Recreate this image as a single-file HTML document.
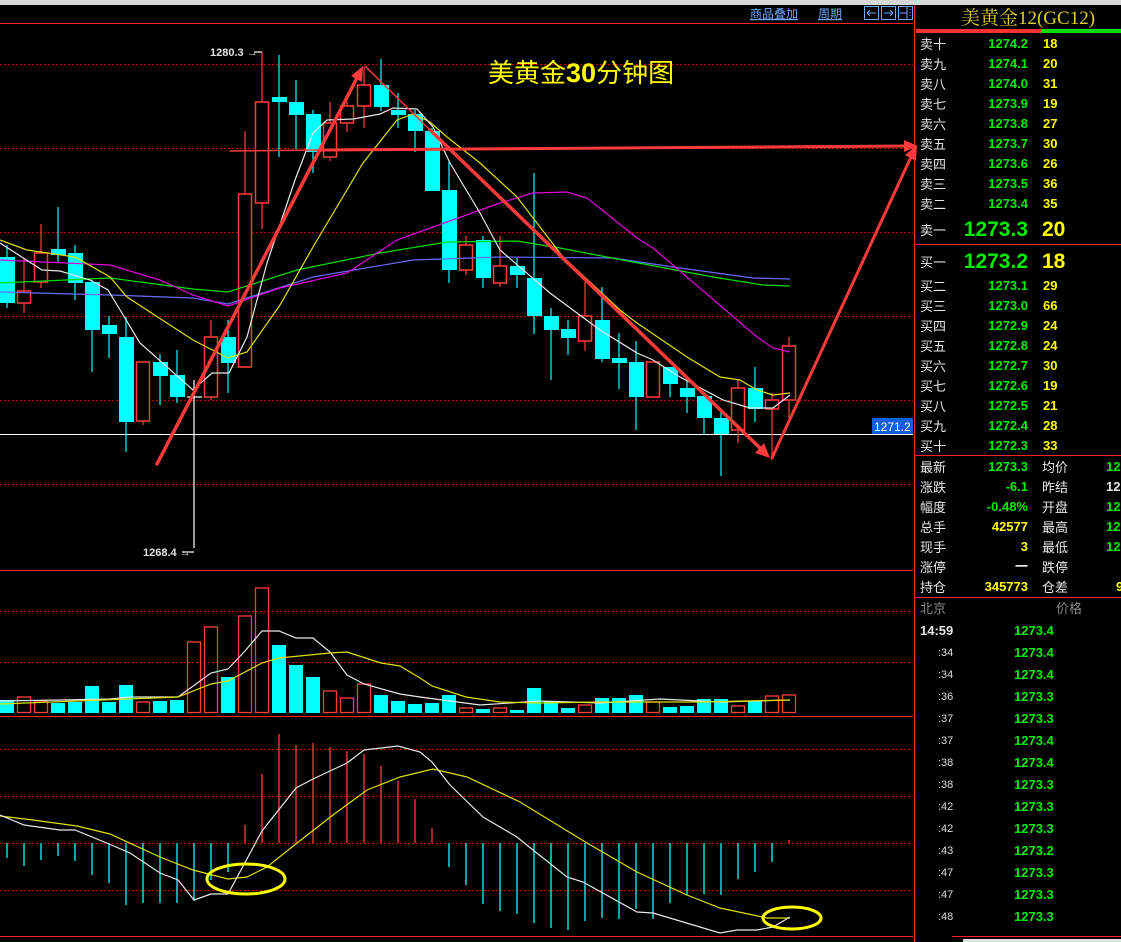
<!DOCTYPE html>
<html><head><meta charset="utf-8"><style>
body{margin:0;background:#000;width:1121px;height:942px;overflow:hidden;position:relative;font-family:"Liberation Sans","Noto Sans CJK SC",sans-serif}
.t{position:absolute;white-space:nowrap;font-size:13px;line-height:16px}
.l{color:#e8e8e8;font-family:"Noto Sans CJK SC",sans-serif;font-size:13px}
.g{color:#00ee00;font-weight:bold}
.y{color:#ffff00;font-weight:bold}
.w{color:#e8e8e8;font-weight:bold}
.r{text-align:right;width:70px}
</style></head><body>
<div style="position:absolute;left:0;top:0;width:1121px;height:5px;background:#d8d8d8"></div>
<svg width="1121" height="942" style="position:absolute;left:0;top:0" xmlns="http://www.w3.org/2000/svg">
<g stroke="#ff2020" stroke-width="1">
<line x1="0" y1="23.5" x2="913" y2="23.5"/>
<line x1="0" y1="570.5" x2="913" y2="570.5"/>
<line x1="0" y1="716.5" x2="913" y2="716.5"/>
<line x1="0" y1="936.5" x2="913" y2="936.5"/>
<line x1="914.5" y1="5" x2="914.5" y2="942"/>
</g>
<g stroke="#c00000" stroke-width="1" stroke-dasharray="2,2">
<line x1="0" y1="64.5" x2="913" y2="64.5"/><line x1="0" y1="148.5" x2="913" y2="148.5"/>
<line x1="0" y1="232.5" x2="913" y2="232.5"/><line x1="0" y1="316.5" x2="913" y2="316.5"/>
<line x1="0" y1="400.5" x2="913" y2="400.5"/><line x1="0" y1="484.5" x2="913" y2="484.5"/>
<line x1="0" y1="611.5" x2="913" y2="611.5"/><line x1="0" y1="662.5" x2="913" y2="662.5"/>
<line x1="0" y1="749.5" x2="913" y2="749.5"/><line x1="0" y1="796.5" x2="913" y2="796.5"/>
<line x1="0" y1="843.5" x2="913" y2="843.5"/><line x1="0" y1="890.5" x2="913" y2="890.5"/>
</g>
<line x1="0" y1="434.5" x2="913" y2="434.5" stroke="#fff" stroke-width="1"/>
<rect x="872" y="418" width="41" height="16" fill="#1060e0"/>
<text x="874" y="431" fill="#fff" font-size="12" font-family="Liberation Sans">1271.2</text>
<!-- wicks -->
<g stroke="#00ffff" stroke-width="1.2">
<line x1="7" y1="245" x2="7" y2="308"/><line x1="58" y1="207" x2="58" y2="262"/><line x1="75" y1="245" x2="75" y2="300"/><line x1="92" y1="280" x2="92" y2="372"/><line x1="109" y1="316" x2="109" y2="358"/><line x1="126" y1="317" x2="126" y2="452"/><line x1="160" y1="354" x2="160" y2="405"/><line x1="177" y1="350" x2="177" y2="403"/><line x1="228" y1="320" x2="228" y2="393"/><line x1="279" y1="55" x2="279" y2="157"/><line x1="296" y1="80" x2="296" y2="149"/><line x1="313" y1="110" x2="313" y2="173"/><line x1="381" y1="59" x2="381" y2="111"/><line x1="398" y1="93" x2="398" y2="128"/><line x1="415" y1="110" x2="415" y2="152"/><line x1="432" y1="128" x2="432" y2="191"/><line x1="449" y1="162" x2="449" y2="283"/><line x1="483" y1="236" x2="483" y2="288"/><line x1="517" y1="258" x2="517" y2="288"/><line x1="534" y1="173" x2="534" y2="334"/><line x1="551" y1="308" x2="551" y2="380"/><line x1="568" y1="320" x2="568" y2="355"/><line x1="602" y1="287" x2="602" y2="362"/><line x1="619" y1="333" x2="619" y2="389"/><line x1="636" y1="341" x2="636" y2="430"/><line x1="670" y1="367" x2="670" y2="397"/><line x1="687" y1="380" x2="687" y2="413"/><line x1="704" y1="397" x2="704" y2="434"/><line x1="721" y1="409" x2="721" y2="476"/><line x1="755" y1="367" x2="755" y2="422"/>
</g>
<g stroke="#ff3c3c" stroke-width="1.2">
<line x1="24" y1="258" x2="24" y2="313"/><line x1="41" y1="224" x2="41" y2="288"/><line x1="143" y1="362" x2="143" y2="425"/><line x1="211" y1="320" x2="211" y2="400"/><line x1="245" y1="131" x2="245" y2="368"/><line x1="262" y1="52" x2="262" y2="229"/><line x1="330" y1="102" x2="330" y2="161"/><line x1="347" y1="102" x2="347" y2="132"/><line x1="364" y1="67" x2="364" y2="128"/><line x1="466" y1="236" x2="466" y2="275"/><line x1="500" y1="236" x2="500" y2="287"/><line x1="585" y1="282" x2="585" y2="351"/><line x1="738" y1="379" x2="738" y2="443"/><line x1="772" y1="393" x2="772" y2="460"/><line x1="789" y1="337" x2="789" y2="422"/>
</g>
<g stroke="#fff" stroke-width="1.2"><line x1="194" y1="380" x2="194" y2="548"/><line x1="187" y1="397" x2="202" y2="397"/><line x1="254" y1="52" x2="262" y2="52"/><line x1="182" y1="552" x2="194" y2="552"/></g>
<g fill="#00ffff">
<rect x="0" y="257" width="15" height="46"/><rect x="51" y="249" width="15" height="6"/><rect x="68" y="253" width="15" height="30"/><rect x="85" y="282" width="15" height="48"/><rect x="102" y="325" width="15" height="9"/><rect x="119" y="337" width="15" height="85"/><rect x="153" y="362" width="15" height="14"/><rect x="170" y="375" width="15" height="22"/><rect x="221" y="337" width="15" height="26"/><rect x="272" y="97" width="15" height="5"/><rect x="289" y="102" width="15" height="13"/><rect x="306" y="114" width="15" height="38"/><rect x="374" y="85" width="15" height="22"/><rect x="391" y="110" width="15" height="5"/><rect x="408" y="114" width="15" height="17"/><rect x="425" y="131" width="15" height="60"/><rect x="442" y="190" width="15" height="80"/><rect x="476" y="240" width="15" height="38"/><rect x="510" y="266" width="15" height="9"/><rect x="527" y="278" width="15" height="38"/><rect x="544" y="316" width="15" height="14"/><rect x="561" y="329" width="15" height="9"/><rect x="595" y="320" width="15" height="39"/><rect x="612" y="358" width="15" height="5"/><rect x="629" y="362" width="15" height="35"/><rect x="663" y="367" width="15" height="17"/><rect x="680" y="388" width="15" height="9"/><rect x="697" y="396" width="15" height="22"/><rect x="714" y="418" width="15" height="16"/><rect x="748" y="388" width="15" height="21"/>
</g>
<g fill="#000" stroke="#ff3c3c" stroke-width="1.5">
<rect x="17.5" y="291" width="13" height="12"/><rect x="34.5" y="253" width="13" height="29"/><rect x="136.5" y="362" width="13" height="59"/><rect x="204.5" y="337" width="13" height="60"/><rect x="238.5" y="194" width="13" height="173"/><rect x="255.5" y="102" width="13" height="101"/><rect x="323.5" y="123" width="13" height="34"/><rect x="340.5" y="106" width="13" height="17"/><rect x="357.5" y="85" width="13" height="21"/><rect x="459.5" y="245" width="13" height="25"/><rect x="493.5" y="266" width="13" height="17"/><rect x="578.5" y="316" width="13" height="25"/><rect x="646.5" y="362" width="13" height="35"/><rect x="731.5" y="388" width="13" height="42"/><rect x="765.5" y="400" width="13" height="9"/><rect x="782.5" y="346" width="13" height="54"/>
</g>
<g fill="none" stroke-width="1.2">
<polyline stroke="#6a6aff" points="0,292 110,295 193,298 228,304 313,277 413,260 500,257 613,258 680,268 753,278 790,279"/>
<polyline stroke="#00dd00" points="0,283 110,278 193,289 228,292 297,270 380,253 447,242 517,241 560,248 633,262 713,277 763,285 790,286"/>
<polyline stroke="#e000e0" points="0,260 110,265 160,280 193,295 228,306 280,288 347,273 397,240 447,222 500,203 533,193 567,192 587,198 637,238 653,248 757,337 773,348 790,352"/>
<polyline stroke="#e0e000" points="0,240 27,250 75,257 110,277 127,297 193,340 228,358 247,352 280,305 313,247 363,163 397,120 413,114 430,122 447,137 480,163 517,197 563,257 620,310 637,323 687,357 720,377 740,380 757,390 773,395 790,393"/>
<polyline stroke="#e8e8e8" points="0,243 42,270 60,271 90,280 108,290 140,343 193,390 212,373 229,373 247,337 267,263 295,180 313,133 327,120 353,119 380,114 393,108 417,109 433,127 450,163 480,213 500,250 550,293 600,330 637,353 653,360 680,377 723,400 750,408 773,408 790,395"/>
</g>
<!-- volume -->
<g fill="#00ffff">
<rect x="0" y="700" width="14" height="13"/><rect x="51" y="703" width="14" height="10"/><rect x="68" y="702" width="14" height="11"/><rect x="85" y="686" width="14" height="27"/><rect x="102" y="702" width="14" height="11"/><rect x="119" y="685" width="14" height="28"/><rect x="153" y="701" width="14" height="12"/><rect x="170" y="700" width="14" height="13"/><rect x="221" y="677" width="14" height="36"/><rect x="272" y="645" width="14" height="68"/><rect x="289" y="665" width="14" height="48"/><rect x="306" y="677" width="14" height="36"/><rect x="374" y="695" width="14" height="18"/><rect x="391" y="701" width="14" height="12"/><rect x="408" y="704" width="14" height="9"/><rect x="425" y="703" width="14" height="10"/><rect x="442" y="695" width="14" height="18"/><rect x="476" y="709" width="14" height="4"/><rect x="510" y="710" width="14" height="3"/><rect x="527" y="688" width="14" height="25"/><rect x="544" y="701" width="14" height="12"/><rect x="561" y="708" width="14" height="5"/><rect x="595" y="698" width="14" height="15"/><rect x="612" y="698" width="14" height="15"/><rect x="629" y="695" width="14" height="18"/><rect x="663" y="707" width="14" height="6"/><rect x="680" y="706" width="14" height="7"/><rect x="697" y="699" width="14" height="14"/><rect x="714" y="699" width="14" height="14"/><rect x="748" y="701" width="14" height="12"/>
</g>
<g fill="none" stroke="#ff3c3c" stroke-width="1.3">
<rect x="17.5" y="697" width="13" height="15.5"/><rect x="34.5" y="701" width="13" height="11.5"/><rect x="136.5" y="702" width="13" height="10.5"/><rect x="187.5" y="642" width="13" height="70.5"/><rect x="204.5" y="627" width="13" height="85.5"/><rect x="238.5" y="616" width="13" height="96.5"/><rect x="255.5" y="588" width="13" height="124.5"/><rect x="323.5" y="691" width="13" height="21.5"/><rect x="340.5" y="698" width="13" height="14.5"/><rect x="357.5" y="684" width="13" height="28.5"/><rect x="459.5" y="708" width="13" height="4.5"/><rect x="493.5" y="708" width="13" height="4.5"/><rect x="578.5" y="705" width="13" height="7.5"/><rect x="646.5" y="702" width="13" height="10.5"/><rect x="731.5" y="706" width="13" height="6.5"/><rect x="765.5" y="696" width="13" height="16.5"/><rect x="782.5" y="695" width="13" height="17.5"/>
</g>
<g fill="none" stroke-width="1.2">
<polyline stroke="#e8e8e8" points="0,701 60,700 110,699 130,697 178,697 211,673 228,669 245,651 262,631 279,631 296,638 313,638 330,652 347,675 364,684 400,694 420,697 480,705 540,701 600,703 660,699 720,702 790,700"/>
<polyline stroke="#e0e000" points="0,704 178,697 211,684 228,681 262,663 279,658 330,653 347,652 381,663 400,666 420,678 432,686 466,697 500,702 540,703 600,702 700,702 790,700"/>
</g>
<!-- MACD -->
<g stroke="#00ffff" stroke-width="1.3">
<line x1="7" y1="843" x2="7" y2="858"/><line x1="24" y1="843" x2="24" y2="866"/><line x1="41" y1="843" x2="41" y2="860"/><line x1="58" y1="843" x2="58" y2="856"/><line x1="75" y1="843" x2="75" y2="861"/><line x1="92" y1="843" x2="92" y2="875"/><line x1="109" y1="843" x2="109" y2="883"/><line x1="126" y1="843" x2="126" y2="905"/><line x1="143" y1="843" x2="143" y2="903"/><line x1="160" y1="843" x2="160" y2="903"/><line x1="177" y1="843" x2="177" y2="903"/><line x1="194" y1="843" x2="194" y2="901"/><line x1="211" y1="843" x2="211" y2="880"/><line x1="228" y1="843" x2="228" y2="872"/>
<line x1="449" y1="843" x2="449" y2="867"/><line x1="466" y1="843" x2="466" y2="885"/><line x1="483" y1="843" x2="483" y2="904"/><line x1="500" y1="843" x2="500" y2="911"/><line x1="517" y1="843" x2="517" y2="914"/><line x1="534" y1="843" x2="534" y2="923"/><line x1="551" y1="843" x2="551" y2="928"/><line x1="568" y1="843" x2="568" y2="930"/><line x1="585" y1="843" x2="585" y2="921"/><line x1="602" y1="843" x2="602" y2="918"/><line x1="619" y1="843" x2="619" y2="919"/><line x1="636" y1="843" x2="636" y2="909"/><line x1="653" y1="843" x2="653" y2="919"/><line x1="670" y1="843" x2="670" y2="903"/><line x1="687" y1="843" x2="687" y2="895"/><line x1="704" y1="843" x2="704" y2="894"/><line x1="721" y1="843" x2="721" y2="895"/><line x1="738" y1="843" x2="738" y2="879"/><line x1="755" y1="843" x2="755" y2="872"/><line x1="772" y1="843" x2="772" y2="862"/>
</g>
<g stroke="#ff3c3c" stroke-width="1.3">
<line x1="245" y1="843" x2="245" y2="825"/><line x1="262" y1="843" x2="262" y2="774"/><line x1="279" y1="843" x2="279" y2="734"/><line x1="296" y1="843" x2="296" y2="745"/><line x1="313" y1="843" x2="313" y2="743"/><line x1="330" y1="843" x2="330" y2="747"/><line x1="347" y1="843" x2="347" y2="751"/><line x1="364" y1="843" x2="364" y2="754"/><line x1="381" y1="843" x2="381" y2="766"/><line x1="398" y1="843" x2="398" y2="781"/><line x1="415" y1="843" x2="415" y2="799"/><line x1="432" y1="843" x2="432" y2="828"/><line x1="789" y1="843" x2="789" y2="840"/>
</g>
<g fill="none" stroke-width="1.2">
<polyline stroke="#e0e000" points="0,816 33,820 77,826 110,834 160,857 193,870 228,879 247,877 267,867 297,843 333,815 367,790 400,777 433,769 467,777 520,802 587,843 637,872 687,895 720,908 767,918 790,918"/>
<polyline stroke="#e8e8e8" points="0,815 24,825 60,830 75,830 109,844 130,853 160,873 178,880 194,900 211,894 228,894 262,831 296,788 313,779 347,763 364,750 398,746 420,752 432,762 450,785 483,817 517,837 533,850 567,877 583,882 637,912 653,913 720,933 737,930 757,930 773,927 790,917"/>
</g>
<ellipse cx="246" cy="879" rx="39" ry="15" fill="none" stroke="#ffff00" stroke-width="3"/>
<ellipse cx="792" cy="918" rx="29" ry="11" fill="none" stroke="#ffff00" stroke-width="3"/>
<!-- arrows -->
<g stroke="#ff3a3a" fill="none" stroke-linecap="round">
<line x1="157" y1="464" x2="358" y2="76" stroke-width="3.5"/>
<line x1="365" y1="66" x2="430" y2="130" stroke-width="1.5"/>
<line x1="430" y1="130" x2="762" y2="450" stroke-width="3.5"/>
<line x1="230" y1="151" x2="320" y2="150" stroke-width="1.5"/>
<line x1="320" y1="150" x2="905" y2="146" stroke-width="3"/>
<line x1="772" y1="458" x2="911" y2="157" stroke-width="3"/>
</g>
<g fill="#ff3a3a">
<polygon points="363,66 362,82 351,76"/>
<polygon points="770,458 755,453 764,443"/>
<polygon points="918,146 904,140 904,152"/>
<polygon points="917,145 916,161 905,155"/>
</g>
<text x="488" y="82" fill="#ffff00" font-size="26" font-family="Noto Sans CJK SC,sans-serif">美黄金<tspan font-family="Liberation Sans" font-weight="bold" font-size="27">30</tspan>分钟图</text>
<text x="210" y="56" fill="#e0e0e0" font-size="11" font-weight="bold" font-family="Liberation Sans">1280.3 →</text>
<text x="143" y="556" fill="#e0e0e0" font-size="11" font-weight="bold" font-family="Liberation Sans">1268.4 →</text>
<text x="750" y="18" fill="#70a8ff" font-size="12" font-family="Noto Sans CJK SC,sans-serif" text-decoration="underline">商品叠加</text>
<text x="818" y="18" fill="#70a8ff" font-size="12" font-family="Noto Sans CJK SC,sans-serif" text-decoration="underline">周期</text>
<g fill="none" stroke="#70a8ff" stroke-width="1"><rect x="864.5" y="6.5" width="14" height="13"/><rect x="881.5" y="6.5" width="14" height="13"/><rect x="898.5" y="6.5" width="14" height="13"/>
<path d="M867 13h9M867 13l3-3M867 13l3 3M893 13h-9M893 13l-3-3M893 13l-3 3M900 13h7M907 7v13M910 9v1M910 12v1M910 15v1"/></g>
<!-- right panel lines -->
<rect x="916" y="29" width="125" height="4" fill="#ff3030"/><rect x="1041" y="29" width="80" height="4" fill="#00dd00"/>
<g stroke="#ff2020" stroke-width="1"><line x1="915" y1="244.5" x2="1121" y2="244.5"/><line x1="915" y1="455.5" x2="1121" y2="455.5"/><line x1="915" y1="597.5" x2="1121" y2="597.5"/><line x1="952" y1="936.5" x2="1121" y2="936.5"/></g>
<text x="1028" y="24" text-anchor="middle" fill="#e0d020" font-size="19" font-family="Liberation Serif,Noto Serif CJK SC,serif">美黄金12(GC12)</text>
</svg>
<div id="rp"></div>
<div class="t l" style="left:920px;top:36px">卖十</div><div class="t g r" style="left:958px;top:36px">1274.2</div><div class="t y" style="left:1043px;top:36px">18</div>
<div class="t l" style="left:920px;top:56px">卖九</div><div class="t g r" style="left:958px;top:56px">1274.1</div><div class="t y" style="left:1043px;top:56px">20</div>
<div class="t l" style="left:920px;top:76px">卖八</div><div class="t g r" style="left:958px;top:76px">1274.0</div><div class="t y" style="left:1043px;top:76px">31</div>
<div class="t l" style="left:920px;top:96px">卖七</div><div class="t g r" style="left:958px;top:96px">1273.9</div><div class="t y" style="left:1043px;top:96px">19</div>
<div class="t l" style="left:920px;top:116px">卖六</div><div class="t g r" style="left:958px;top:116px">1273.8</div><div class="t y" style="left:1043px;top:116px">27</div>
<div class="t l" style="left:920px;top:136px">卖五</div><div class="t g r" style="left:958px;top:136px">1273.7</div><div class="t y" style="left:1043px;top:136px">30</div>
<div class="t l" style="left:920px;top:156px">卖四</div><div class="t g r" style="left:958px;top:156px">1273.6</div><div class="t y" style="left:1043px;top:156px">26</div>
<div class="t l" style="left:920px;top:176px">卖三</div><div class="t g r" style="left:958px;top:176px">1273.5</div><div class="t y" style="left:1043px;top:176px">36</div>
<div class="t l" style="left:920px;top:196px">卖二</div><div class="t g r" style="left:958px;top:196px">1273.4</div><div class="t y" style="left:1043px;top:196px">35</div>
<div class="t l" style="left:920px;top:222px">卖一</div><div class="t g r" style="left:938px;top:218px;width:90px;font-size:21px;line-height:24px">1273.3</div><div class="t y" style="left:1042px;top:218px;font-size:21px;line-height:24px">20</div>
<div class="t l" style="left:920px;top:254px">买一</div><div class="t g r" style="left:938px;top:250px;width:90px;font-size:21px;line-height:24px">1273.2</div><div class="t y" style="left:1042px;top:250px;font-size:21px;line-height:24px">18</div>
<div class="t l" style="left:920px;top:278px">买二</div><div class="t g r" style="left:958px;top:278px">1273.1</div><div class="t y" style="left:1043px;top:278px">29</div>
<div class="t l" style="left:920px;top:298px">买三</div><div class="t g r" style="left:958px;top:298px">1273.0</div><div class="t y" style="left:1043px;top:298px">66</div>
<div class="t l" style="left:920px;top:318px">买四</div><div class="t g r" style="left:958px;top:318px">1272.9</div><div class="t y" style="left:1043px;top:318px">24</div>
<div class="t l" style="left:920px;top:338px">买五</div><div class="t g r" style="left:958px;top:338px">1272.8</div><div class="t y" style="left:1043px;top:338px">24</div>
<div class="t l" style="left:920px;top:358px">买六</div><div class="t g r" style="left:958px;top:358px">1272.7</div><div class="t y" style="left:1043px;top:358px">30</div>
<div class="t l" style="left:920px;top:378px">买七</div><div class="t g r" style="left:958px;top:378px">1272.6</div><div class="t y" style="left:1043px;top:378px">19</div>
<div class="t l" style="left:920px;top:398px">买八</div><div class="t g r" style="left:958px;top:398px">1272.5</div><div class="t y" style="left:1043px;top:398px">21</div>
<div class="t l" style="left:920px;top:418px">买九</div><div class="t g r" style="left:958px;top:418px">1272.4</div><div class="t y" style="left:1043px;top:418px">28</div>
<div class="t l" style="left:920px;top:438px">买十</div><div class="t g r" style="left:958px;top:438px">1272.3</div><div class="t y" style="left:1043px;top:438px">33</div>

<div class="t l" style="left:920px;top:459px">最新</div><div class="t g r" style="left:958px;top:459px">1273.3</div><div class="t l" style="left:1042px;top:459px">均价</div><div class="t g" style="left:1106px;top:459px">12</div>
<div class="t l" style="left:920px;top:479px">涨跌</div><div class="t g r" style="left:958px;top:479px">-6.1</div><div class="t l" style="left:1042px;top:479px">昨结</div><div class="t w" style="left:1106px;top:479px">12</div>
<div class="t l" style="left:920px;top:499px">幅度</div><div class="t g r" style="left:958px;top:499px">-0.48%</div><div class="t l" style="left:1042px;top:499px">开盘</div><div class="t g" style="left:1106px;top:499px">12</div>
<div class="t l" style="left:920px;top:519px">总手</div><div class="t y r" style="left:958px;top:519px">42577</div><div class="t l" style="left:1042px;top:519px">最高</div><div class="t g" style="left:1106px;top:519px">12</div>
<div class="t l" style="left:920px;top:539px">现手</div><div class="t y r" style="left:958px;top:539px">3</div><div class="t l" style="left:1042px;top:539px">最低</div><div class="t g" style="left:1106px;top:539px">12</div>
<div class="t l" style="left:920px;top:559px">涨停</div><div class="t w r" style="left:958px;top:559px">一</div><div class="t l" style="left:1042px;top:559px">跌停</div>
<div class="t l" style="left:920px;top:579px">持仓</div><div class="t y r" style="left:958px;top:579px">345773</div><div class="t l" style="left:1042px;top:579px">仓差</div><div class="t y" style="left:1116px;top:579px">9</div>
<div class="t l" style="left:920px;top:600px;color:#888">北京</div><div class="t l" style="left:1056px;top:600px;color:#888">价格</div>
<div class="t w" style="left:920px;top:623px">14:59</div><div class="t g" style="left:1014px;top:623px">1273.4</div>
<div class="t" style="left:938px;top:645px;color:#ddd;font-size:11px">:34</div><div class="t g" style="left:1014px;top:645px">1273.4</div>
<div class="t" style="left:938px;top:667px;color:#ddd;font-size:11px">:34</div><div class="t g" style="left:1014px;top:667px">1273.4</div>
<div class="t" style="left:938px;top:689px;color:#ddd;font-size:11px">:36</div><div class="t g" style="left:1014px;top:689px">1273.3</div>
<div class="t" style="left:938px;top:711px;color:#ddd;font-size:11px">:37</div><div class="t g" style="left:1014px;top:711px">1273.3</div>
<div class="t" style="left:938px;top:733px;color:#ddd;font-size:11px">:37</div><div class="t g" style="left:1014px;top:733px">1273.4</div>
<div class="t" style="left:938px;top:755px;color:#ddd;font-size:11px">:38</div><div class="t g" style="left:1014px;top:755px">1273.4</div>
<div class="t" style="left:938px;top:777px;color:#ddd;font-size:11px">:38</div><div class="t g" style="left:1014px;top:777px">1273.3</div>
<div class="t" style="left:938px;top:799px;color:#ddd;font-size:11px">:42</div><div class="t g" style="left:1014px;top:799px">1273.3</div>
<div class="t" style="left:938px;top:821px;color:#ddd;font-size:11px">:42</div><div class="t g" style="left:1014px;top:821px">1273.3</div>
<div class="t" style="left:938px;top:843px;color:#ddd;font-size:11px">:43</div><div class="t g" style="left:1014px;top:843px">1273.2</div>
<div class="t" style="left:938px;top:865px;color:#ddd;font-size:11px">:47</div><div class="t g" style="left:1014px;top:865px">1273.3</div>
<div class="t" style="left:938px;top:887px;color:#ddd;font-size:11px">:47</div><div class="t g" style="left:1014px;top:887px">1273.3</div>
<div class="t" style="left:938px;top:909px;color:#ddd;font-size:11px">:48</div><div class="t g" style="left:1014px;top:909px">1273.3</div>
<div style="position:absolute;left:963px;top:939px;width:158px;height:3px;background:#e0e0e0"></div>
</body></html>
